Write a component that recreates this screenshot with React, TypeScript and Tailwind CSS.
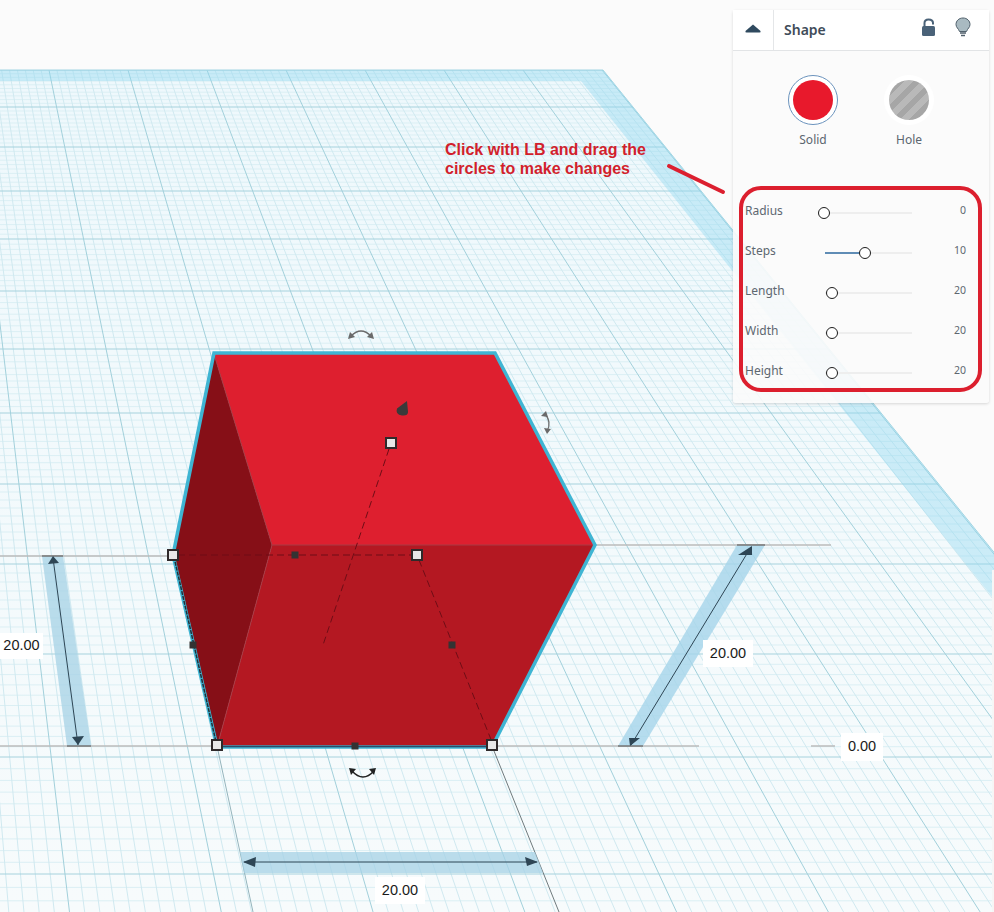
import React from "react";

const VX = -138;
const VY = -844;
const fanX = (x0: number, y: number) => VX + ((x0 - VX) * (y - VY)) / (70 - VY);

const MAJOR_Y = [70, 107, 147, 191, 239, 291, 349, 413, 484, 564, 654, 757, 874, 1008];
const BOTTOM = 912;

const horizontals: { y: number; major: boolean }[] = [];
MAJOR_Y.slice(0, -1).forEach((y, i) => {
  const next = MAJOR_Y[i + 1];
  for (let k = 0; k < 10; k++) {
    horizontals.push({ y: y + ((next - y) * k) / 10, major: k === 0 });
  }
});

const verticals: { x0: number; major: boolean }[] = [];
for (let i = -20; i <= 70; i++) {
  verticals.push({ x0: 49 + i * 7.9, major: i % 10 === 0 });
}

const planePts = `-10,70 603,70 ${fanX(603, BOTTOM)},${BOTTOM} -10,${BOTTOM}`;
const bandPts = `-10,70 603,70 ${fanX(603, BOTTOM)},${BOTTOM} ${fanX(581, BOTTOM)},${BOTTOM} 581,81 -10,81`;

function Handle({ x, y }: { x: number; y: number }) {
  return <rect x={x - 5} y={y - 5} width={10} height={10} fill="#e8e8e8" stroke="#2f2a2b" strokeWidth={2} />;
}
function Dot({ x, y }: { x: number; y: number }) {
  return <rect x={x - 3.5} y={y - 3.5} width={7} height={7} fill="#333333" />;
}

function Scene() {
  return (
    <svg className="absolute inset-0" width={994} height={912} viewBox="0 0 994 912">
      <defs>
        <linearGradient id="plane" x1="0" y1="70" x2="0" y2="912" gradientUnits="userSpaceOnUse">
          <stop offset="0" stopColor="#eef8fc" />
          <stop offset="1" stopColor="#f7fbfc" />
        </linearGradient>
        <clipPath id="planeClip">
          <polygon points={planePts} />
        </clipPath>
      </defs>
      <rect width={994} height={912} fill="#fbfbfb" />
      <polygon points={planePts} fill="url(#plane)" />
      <g clipPath="url(#planeClip)">
        {horizontals.filter((h) => !h.major).map((h, i) => (
          <line key={i} x1={0} x2={994} y1={h.y} y2={h.y} stroke="#dbeff4" strokeWidth={1} />
        ))}
        {verticals.filter((v) => !v.major).map((v, i) => (
          <line key={i} x1={v.x0} y1={70} x2={fanX(v.x0, BOTTOM)} y2={BOTTOM} stroke="#d0e9f0" strokeWidth={1} />
        ))}
        {horizontals.filter((h) => h.major).map((h, i) => (
          <line key={i} x1={0} x2={994} y1={h.y} y2={h.y} stroke="#a6d2dd" strokeWidth={1} />
        ))}
        {verticals.filter((v) => v.major).map((v, i) => (
          <line key={i} x1={v.x0} y1={70} x2={fanX(v.x0, BOTTOM)} y2={BOTTOM} stroke="#a2d0db" strokeWidth={1} />
        ))}
      </g>
      <polygon points={bandPts} fill="#8fd8f0" fillOpacity={0.4} />
      <polyline points={`0,70 603,70 ${fanX(603, BOTTOM)},${BOTTOM}`} fill="none" stroke="#a3d5e3" strokeWidth={1} />

      {/* extension lines */}
      <g fill="none" stroke="#bbbbbb" strokeWidth={1.5}>
        <line x1={0} y1={556} x2={173} y2={556} />
        <line x1={0} y1={746} x2={217} y2={746} />
        <line x1={492} y1={746} x2={699} y2={746} />
        <line x1={595} y1={545} x2={831} y2={545} />
        <line x1={811} y1={746} x2={835} y2={746} />
      </g>
      <line x1={217} y1={746} x2={253} y2={912} stroke="#94b4bc" strokeWidth={1} />
      <line x1={492} y1={746} x2={559} y2={912} stroke="#6f7a7d" strokeWidth={1} />

      {/* dimension: height */}
      <polygon points="42,556 63,556 91,746 67,746" fill="#a5d2e6" fillOpacity={0.75} />
      <line x1={42} y1={556} x2={63} y2={556} stroke="#777" strokeWidth={1.5} />
      <line x1={67} y1={746} x2={91} y2={746} stroke="#777" strokeWidth={1.5} />
      <line x1={53} y1={558} x2={78} y2={745} stroke="#2e4655" strokeWidth={1} />
      <polygon points="53,556 48,564 59,563" fill="#2e4655" />
      <polygon points="78,745 72,737 84,736" fill="#2e4655" />

      {/* dimension: depth */}
      <polygon points="737,545 765,545 643,746 618,746" fill="#a5d5ea" fillOpacity={0.8} />
      <line x1={737} y1={545} x2={765} y2={545} stroke="#777" strokeWidth={1.5} />
      <line x1={618} y1={746} x2={643} y2={746} stroke="#777" strokeWidth={1.5} />
      <line x1={751} y1={547} x2={631} y2={745} stroke="#2e4655" strokeWidth={1} />
      <polygon points="752,546 738,555 752,555" fill="#2e4655" />
      <polygon points="630,746 629,738 640,738" fill="#2e4655" />

      {/* dimension: width */}
      <polygon points="240,852 535,852 543,873 244,873" fill="#a5d2e6" fillOpacity={0.75} />
      <line x1={244} y1={862} x2={537} y2={862} stroke="#2e4655" strokeWidth={1} />
      <polygon points="243,862 256,857 255,867" fill="#2e4655" />
      <polygon points="538,862 525,857 527,866" fill="#2e4655" />

      {/* cube */}
      <polygon points="214,354 495,354 595,545 272,545" fill="#de1f2f" />
      <polygon points="272,545 595,545 492,747 217,747" fill="#b41822" />
      <polygon points="214,354 272,545 217,747 173,555" fill="#860f17" />
      <g fill="none" stroke="#a83a44" strokeWidth={1}>
        <line x1={214} y1={354} x2={272} y2={545} />
        <line x1={272} y1={545} x2={595} y2={545} />
        <line x1={272} y1={545} x2={217} y2={747} />
      </g>
      <polyline
        points="173,555 214,353 495,353 595,545 492,747 217,747 173,555"
        fill="none"
        stroke="#3fb5d3"
        strokeWidth={3.5}
        strokeLinejoin="miter"
      />
      <line x1={217} y1={746.5} x2={492} y2={746.5} stroke="#2f4a66" strokeWidth={1.5} />
      <line x1={174} y1={557} x2={216} y2={742} stroke="#22303a" strokeWidth={1.5} strokeDasharray="4 1" />

      {/* dashes */}
      <g fill="none" stroke="#6f0d16" strokeWidth={1} strokeDasharray="7 4">
        <line x1={178} y1={555} x2={412} y2={555} />
        <line x1={389} y1={449} x2={323} y2={645} />
        <line x1={419} y1={560} x2={492} y2={742} />
      </g>

      {/* handles */}
      <Dot x={295} y={555} />
      <Dot x={452} y={645} />
      <Dot x={355} y={746} />
      <Dot x={193} y={645} />
      <Handle x={173} y={555} />
      <Handle x={417} y={555} />
      <Handle x={391} y={443} />
      <Handle x={217} y={745} />
      <Handle x={492} y={745} />

      {/* cone */}
      <path d="M407 401 L397 408.500 Q395 414.500 402 415.500 Q408 416 408 412 Z" fill="#3a3a3a" />

      {/* rotate arrows */}
      <g fill="none" stroke="#6a6a6a" strokeWidth={1.5}>
        <path d="M351 336 Q361 326 371 336" />
      </g>
      <polygon points="348,339 350,332 355,337" fill="#6a6a6a" />
      <polygon points="374,339 372,332 367,337" fill="#6a6a6a" />
      <path d="M545 414 Q552 422 547 431" fill="none" stroke="#6a6a6a" strokeWidth={1.2} />
      <polygon points="541,416 546,411 548,417" fill="#6a6a6a" />
      <polygon points="547,434 544,428 551,429" fill="#6a6a6a" />
      <path d="M352 771 Q363 783 374 771" fill="none" stroke="#222" strokeWidth={1.5} />
      <polygon points="349,768 356,769 351,775" fill="#222" />
      <polygon points="376,768 369,769 374,775" fill="#222" />

      {/* annotation stroke */}
      <line x1={669} y1={166} x2={723} y2={192} stroke="#dc1f2f" strokeWidth={4} strokeLinecap="round" />
    </svg>
  );
}

function DimLabel({ text, className }: { text: string; className: string }) {
  return (
    <div
      className={`absolute flex items-center justify-center bg-white text-[14.5px] text-[#1a1a1a] font-['Liberation_Sans',Arial,sans-serif] ${className}`}
    >
      {text}
    </div>
  );
}

const rows = [
  { label: "Radius", value: "0", pos: 0, left: -1 },
  { label: "Steps", value: "10", pos: 40, left: 40 },
  { label: "Length", value: "20", pos: 0, left: 7 },
  { label: "Width", value: "20", pos: 0, left: 7 },
  { label: "Height", value: "20", pos: 0, left: 7 },
];

function Panel() {
  return (
    <div className="absolute left-[733px] top-[10px] w-[256px] h-[393px] rounded-[3px] bg-[#fbfbfb]/90 shadow-[0_1px_3px_rgba(0,0,0,0.15)] font-['Noto_Sans',sans-serif] flex flex-col">
      <div className="flex h-[41px] items-center border-b border-[#e2e4e6] bg-white">
        <div className="flex h-full w-[41px] items-center justify-center border-r border-[#e4e6e8]">
          <svg width="16" height="9" viewBox="0 0 16 9" className="-mt-[3px]">
            <path d="M8 0.500 L15.500 7 Q16 8.500 14.500 8.500 L1.500 8.500 Q0 8.500 0.500 7 Z" fill="#2f4a5f" />
          </svg>
        </div>
        <div className="ml-[10px] -mt-[2px] flex-1 text-[14px] font-semibold text-[#3f4c59]">Shape</div>
        <div className="mr-[18px] flex items-center gap-[19px]">
          <svg width="15" height="19" viewBox="0 0 15 19" className="-mt-[6px]">
            <path d="M3.500 9 V5 Q3.500 1.500 7.500 1.500 Q12 1.500 12 5 V6.500" fill="none" stroke="#4a6278" strokeWidth="2" />
            <rect x="1" y="8" width="13" height="10" rx="1.500" fill="#4a6278" />
          </svg>
          <svg width="16" height="20" viewBox="0 0 16 20" className="-mt-[6px]">
            <path
              d="M8 1 C3.800 1 1 4 1 7.500 C1 10.500 3.500 11.500 4.500 14.500 L11.500 14.500 C12.500 11.500 15 10.500 15 7.500 C15 4 12.200 1 8 1 Z"
              fill="#a9bac1"
              stroke="#50606c"
              strokeWidth="1"
            />
            <path d="M5 16 H11 M6 18.500 H10" stroke="#50606c" strokeWidth="1.500" />
          </svg>
        </div>
      </div>

      <div className="mt-[24px] flex justify-center gap-[46px] text-[12px] text-[#5b6670]">
        <div className="flex w-[50px] flex-col items-center gap-[6px]">
          <div className="flex h-[50px] w-[50px] items-center justify-center rounded-full border-[1.5px] border-[#6b93bd] bg-white">
            <div className="h-[40px] w-[40px] rounded-full bg-[#e8192c]" />
          </div>
          <span className="leading-[17px]">Solid</span>
        </div>
        <div className="flex w-[50px] flex-col items-center gap-[6px]">
          <div className="flex h-[50px] w-[50px] items-center justify-center rounded-full bg-white">
            <div className="h-[40px] w-[40px] rounded-full bg-[repeating-linear-gradient(135deg,#b9b9b9_0,#b9b9b9_6px,#a6a6a6_6px,#a6a6a6_12px)]" />
          </div>
          <span className="leading-[17px]">Hole</span>
        </div>
      </div>

      <div className="mt-[56px] flex flex-col gap-[23px] pl-[12px] pr-[23px]">
        {rows.map((r) => (
          <div key={r.label} className="flex h-[17px] items-center">
            <span className="-mt-[4px] w-[80px] text-[12px] leading-[17px] text-[#5d6770]">{r.label}</span>
            <div className="relative h-[2px] w-[87px] bg-[#eeeeee]">
              {r.pos > 0 && <div className="h-full bg-[#5f8cb5]" style={{ width: r.pos }} />}
              <div
                className="absolute top-[-5px] h-[12px] w-[12px] -translate-x-1/2 rounded-full border-[1.5px] border-[#1d1d1d] bg-white"
                style={{ left: r.left }}
              />
            </div>
            <span className="-mt-[3px] flex-1 text-right text-[10.5px] text-[#5d6770]">{r.value}</span>
          </div>
        ))}
      </div>
    </div>
  );
}

export default function App() {
  return (
    <div className="relative h-[912px] w-[994px] overflow-hidden bg-[#fbfbfb]">
      <Scene />
      <div className="absolute left-[445px] top-[140px] w-[215px] text-[16px] font-bold leading-[19px] text-[#d21f2c] font-['Liberation_Sans',Arial,sans-serif]">
        Click with LB and drag the
        <br />
        circles to make changes
      </div>
      <DimLabel text="20.00" className="left-0 top-[633px] h-[26px] w-[43px]" />
      <DimLabel text="20.00" className="left-[703px] top-[640px] h-[27px] w-[50px]" />
      <DimLabel text="0.00" className="left-[841px] top-[733px] h-[28px] w-[42px]" />
      <DimLabel text="20.00" className="left-[375px] top-[877px] h-[27px] w-[50px]" />
      <Panel />
      <div className="absolute left-[739px] top-[186px] h-[206px] w-[243px] rounded-[22px] border-[4.5px] border-[#dc1f2e]" />
      <div className="absolute left-[992px] top-[570px] h-[342px] w-[2px] bg-[#f6f6f6]" />
    </div>
  );
}
